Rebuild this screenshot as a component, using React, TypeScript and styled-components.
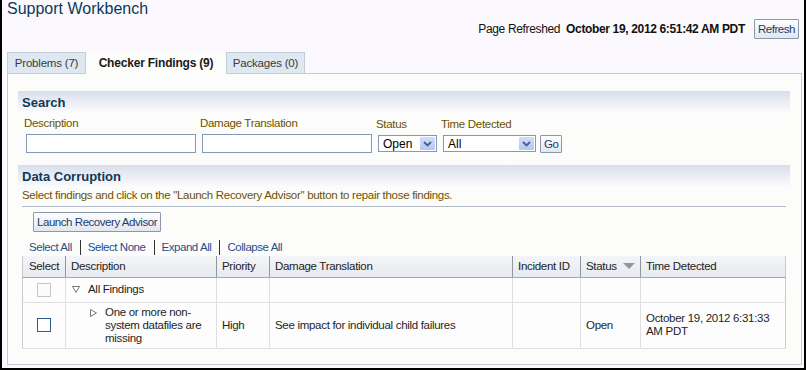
import styled, { createGlobalStyle } from 'styled-components';

const GlobalStyle = createGlobalStyle`
  html, body { margin: 0; padding: 0; }
  body {
    font-family: 'Liberation Sans', Arial, sans-serif;
    font-size: 11px;
    color: #1e1e1e;
  }
  * { box-sizing: border-box; }
`;

const Frame = styled.div`
  width: 806px;
  height: 370px;
  background: #fbf9fd;
  border: 2px solid #000;
  border-top: none;
  display: flex;
  flex-direction: column;
  overflow: hidden;
`;

const Title = styled.h1`
  margin: 0;
  padding-left: 5px;
  height: 18px;
  line-height: 18px;
  font-size: 16px;
  font-weight: normal;
  color: #0b3a5a;
`;

const RefreshBar = styled.div`
  display: flex;
  justify-content: flex-end;
  align-items: center;
  gap: 8px;
  height: 20px;
  margin-top: 1px;
  padding-right: 5px;
  font-size: 12px;
  letter-spacing: -0.35px;
  color: #111;
`;

const Stamp = styled.b`
  margin-right: 1px;
`;

const Button = styled.button<{ $h?: number }>`
  height: ${(p) => p.$h ?? 20}px;
  padding: 0 3px;
  border: 1px solid #8b97aa;
  border-radius: 1px;
  background: linear-gradient(#ffffff, #e2e6ee);
  font-family: inherit;
  font-size: 11.5px;
  letter-spacing: -0.45px;
  color: #1c3b6c;
  cursor: pointer;
`;

const Tabs = styled.div`
  display: flex;
  margin: 13px 0 0 5px;
`;

const Tab = styled.div<{ $active?: boolean; $w: number }>`
  position: relative;
  z-index: ${(p) => (p.$active ? 1 : 0)};
  width: ${(p) => p.$w}px;
  height: ${(p) => (p.$active ? 22 : 21)}px;
  margin-bottom: ${(p) => (p.$active ? -1 : 0)}px;
  display: flex;
  align-items: center;
  justify-content: center;
  padding-bottom: ${(p) => (p.$active ? 1 : 0)}px;
  border: 1px solid ${(p) => (p.$active ? 'transparent' : '#c3ccd9')};
  border-bottom: none;
  background: ${(p) => (p.$active ? '#fcfdfb' : '#dfe7f1')};
  font-size: ${(p) => (p.$active ? 12 : 11.5)}px;
  letter-spacing: -0.2px;
  font-weight: ${(p) => (p.$active ? 'bold' : 'normal')};
  color: ${(p) => (p.$active ? '#1a1a1a' : '#3a3a3a')};
`;

const Panel = styled.div`
  flex: 1;
  margin: 0 2px 3px 5px;
  padding: 17px 11px 0 10px;
  border: 1px solid #c5cbd6;
  background: #fcfdfb;
`;

const SectionHeader = styled.h2`
  margin: 0;
  height: 22px;
  line-height: 23px;
  padding-left: 4px;
  font-size: 13px;
  font-weight: bold;
  color: #0b3a5a;
  background: linear-gradient(#d8deea, #eef0f6 60%, #fcfbfd);
`;

const SearchRow = styled.div`
  display: flex;
  align-items: flex-end;
  gap: 4px;
  padding: 4px 0 0 6px;
  margin-bottom: 12px;
`;

const Field = styled.label`
  display: flex;
  flex-direction: column;
  gap: 4px;
`;

const FieldLabel = styled.span`
  line-height: 13px;
  font-size: 11.5px;
  color: #6b5200;
  letter-spacing: -0.3px;
`;

const TextInput = styled.input`
  width: 170px;
  height: 19px;
  margin-left: 2px;
  border: 1px solid #7f9db9;
  background: #fff;
  font-family: inherit;
  font-size: 11px;
`;

const SelectBox = styled.div<{ $w: number }>`
  width: ${(p) => p.$w}px;
  height: 17px;
  margin: 0 0 1px 2px;
  display: flex;
  align-items: center;
  justify-content: space-between;
  padding: 0 1px 0 4px;
  border: 1px solid #7f9db9;
  background: #fff;
  font-size: 12px;
  color: #000;
`;

const Arrow = styled.span`
  width: 15px;
  height: 13px;
  display: flex;
  align-items: center;
  justify-content: center;
  border-radius: 1px;
  background: linear-gradient(#cfddfb, #b2c8f3);
`;

const DataBody = styled.div`
  padding: 0 4px;
`;

const Hint = styled.p`
  margin: 0;
  padding: 2px 0 4px;
  line-height: 13px;
  font-size: 11.5px;
  color: #6b5200;
  letter-spacing: -0.3px;
  border-bottom: 1px solid #b4bccb;
`;

const Toolbar = styled.div`
  padding: 5px 0 0 11px;
`;

const Links = styled.div`
  display: flex;
  align-items: center;
  height: 16px;
  margin: 7px 0 0 7px;
`;

const Link = styled.a`
  color: #1f4e8c;
  font-size: 11.5px;
  text-decoration: none;
  letter-spacing: -0.45px;
  cursor: pointer;
`;

const Bar = styled.span`
  width: 1px;
  height: 15px;
  margin: 0 7px 0 8px;
  background: #333;
`;

const Table = styled.table`
  width: 763px;
  margin-top: 1px;
  border-collapse: collapse;
  table-layout: fixed;
  background: #fdfdfd;
  border-left: 1px solid #c8ccd2;
  border-right: 1px solid #c8ccd2;
`;

const Th = styled.th<{ $center?: boolean }>`
  height: 21px;
  padding: 0 5px;
  text-align: ${(p) => (p.$center ? 'center' : 'left')};
  font-weight: normal;
  font-size: 11.5px;
  color: #222;
  letter-spacing: -0.3px;
  white-space: nowrap;
  background: linear-gradient(#f4f5f8, #e6e9ee);
  border-left: 1px solid #8f96a2;
  border-bottom: 1px solid #a4aab3;
  &:first-child { border-left: none; }
`;

const Td = styled.td<{ $center?: boolean; $h?: number }>`
  height: ${(p) => p.$h ?? 25}px;
  padding: 0 5px;
  vertical-align: middle;
  text-align: ${(p) => (p.$center ? 'center' : 'left')};
  line-height: 13px;
  font-size: 11.5px;
  letter-spacing: -0.3px;
  color: #1e1e1e;
  border-left: 1px solid #dedfe2;
  border-bottom: 1px solid #dedfe2;
  &:first-child { border-left: none; }
`;

const Check = styled.span<{ $disabled?: boolean }>`
  display: inline-block;
  width: 14px;
  height: 14px;
  vertical-align: middle;
  border: 1px solid ${(p) => (p.$disabled ? '#c9c7bd' : '#2f5a8a')};
  background: ${(p) => (p.$disabled ? '#fbfbf8' : '#fff')};
`;

const Tree = styled.div<{ $indent: number }>`
  display: flex;
  align-items: flex-start;
  gap: 8px;
  padding-left: ${(p) => p.$indent}px;
`;

const Twisty = styled.svg`
  flex: none;
  margin-top: 3px;
`;

const TreeText = styled.span<{ $w?: number }>`
  width: ${(p) => (p.$w ? `${p.$w}px` : 'auto')};
`;

const SortMark = styled.svg`
  margin-left: 6px;
  vertical-align: 1px;
`;

const Chevron = () => (
  <svg width="9" height="6" viewBox="0 0 9 6">
    <path d="M1 1 L4.5 4.5 L8 1" fill="none" stroke="#4a5f86" strokeWidth="1.8" />
  </svg>
);

const Select = ({ w, value }: { w: number; value: string }) => (
  <SelectBox $w={w}>
    <span>{value}</span>
    <Arrow>
      <Chevron />
    </Arrow>
  </SelectBox>
);

const columns = [
  { label: 'Select', w: 43, center: true },
  { label: 'Description', w: 151 },
  { label: 'Priority', w: 53 },
  { label: 'Damage Translation', w: 243 },
  { label: 'Incident ID', w: 68 },
  { label: 'Status', w: 60 },
  { label: 'Time Detected', w: 145 },
];

export default function App() {
  return (
    <>
      <GlobalStyle />
      <Frame>
        <Title>Support Workbench</Title>
        <RefreshBar>
          <span>
            Page Refreshed&nbsp;&nbsp;<Stamp>October 19, 2012 6:51:42 AM PDT</Stamp>
          </span>
          <Button $h={20}>Refresh</Button>
        </RefreshBar>

        <Tabs>
          <Tab $w={79}>Problems (7)</Tab>
          <Tab $w={140} $active>
            Checker Findings (9)
          </Tab>
          <Tab $w={79}>Packages (0)</Tab>
        </Tabs>

        <Panel>
          <SectionHeader>Search</SectionHeader>
          <SearchRow>
            <Field>
              <FieldLabel>Description</FieldLabel>
              <TextInput />
            </Field>
            <Field>
              <FieldLabel>Damage Translation</FieldLabel>
              <TextInput />
            </Field>
            <Field>
              <FieldLabel>Status</FieldLabel>
              <Select w={59} value="Open" />
            </Field>
            <Field>
              <FieldLabel>Time Detected</FieldLabel>
              <Select w={93} value="All" />
            </Field>
            <Button $h={18}>Go</Button>
          </SearchRow>

          <SectionHeader>Data Corruption</SectionHeader>
          <DataBody>
            <Hint>
              Select findings and click on the "Launch Recovery Advisor" button to repair those
              findings.
            </Hint>
            <Toolbar>
              <Button $h={20}>Launch Recovery Advisor</Button>
            </Toolbar>
            <Links>
              <Link>Select All</Link>
              <Bar />
              <Link>Select None</Link>
              <Bar />
              <Link>Expand All</Link>
              <Bar />
              <Link>Collapse All</Link>
            </Links>

            <Table>
              <colgroup>
                {columns.map((c) => (
                  <col key={c.label} style={{ width: c.w }} />
                ))}
              </colgroup>
              <thead>
                <tr>
                  {columns.map((c) => (
                    <Th key={c.label} $center={c.center}>
                      {c.label}
                      {c.label === 'Status' && (
                        <SortMark width="12" height="6" viewBox="0 0 12 6">
                          <path d="M0 0 H12 L6 6 Z" fill="#8d98a8" />
                        </SortMark>
                      )}
                    </Th>
                  ))}
                </tr>
              </thead>
              <tbody>
                <tr>
                  <Td $center>
                    <Check $disabled />
                  </Td>
                  <Td>
                    <Tree $indent={1}>
                      <Twisty width="8" height="7" viewBox="0 0 8 7">
                        <path d="M0.5 0.5 H7.5 L4 6.5 Z" fill="#fff" stroke="#7a7a7a" />
                      </Twisty>
                      <TreeText>All Findings</TreeText>
                    </Tree>
                  </Td>
                  <Td />
                  <Td />
                  <Td />
                  <Td />
                  <Td />
                </tr>
                <tr>
                  <Td $center $h={46}>
                    <Check />
                  </Td>
                  <Td $h={46}>
                    <Tree $indent={19}>
                      <Twisty width="7" height="8" viewBox="0 0 7 8">
                        <path d="M0.5 0.5 L6.5 4 L0.5 7.5 Z" fill="#fff" stroke="#7a7a7a" />
                      </Twisty>
                      <TreeText $w={106}>One or more non-system datafiles are missing</TreeText>
                    </Tree>
                  </Td>
                  <Td $h={46}>High</Td>
                  <Td $h={46}>See impact for individual child failures</Td>
                  <Td $h={46} />
                  <Td $h={46}>Open</Td>
                  <Td $h={46}>October 19, 2012 6:31:33 AM PDT</Td>
                </tr>
              </tbody>
            </Table>
          </DataBody>
        </Panel>
      </Frame>
    </>
  );
}
